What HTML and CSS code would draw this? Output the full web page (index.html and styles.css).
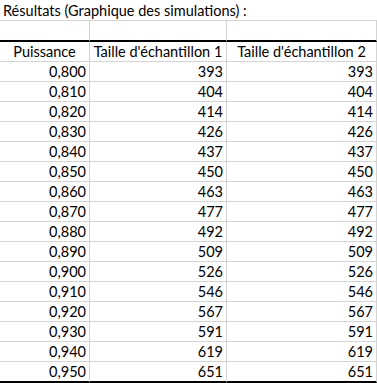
FILE: index.html
```html
<!DOCTYPE html>
<html lang="fr">
<head>
<meta charset="utf-8">
<title>Résultats</title>
<link rel="stylesheet" href="styles.css">
</head>
<body>
<div class="sheet">
  <div class="cell title">Résultats (Graphique des simulations) :</div>
  <div class="cell blank"></div><div class="cell blank"></div><div class="cell blank"></div>
  <div class="cell head">Puissance</div><div class="cell head">Taille d'échantillon 1</div><div class="cell head">Taille d'échantillon 2</div>
  <div class="cell num">0,800</div><div class="cell num">393</div><div class="cell num">393</div>
  <div class="cell num">0,810</div><div class="cell num">404</div><div class="cell num">404</div>
  <div class="cell num">0,820</div><div class="cell num">414</div><div class="cell num">414</div>
  <div class="cell num">0,830</div><div class="cell num">426</div><div class="cell num">426</div>
  <div class="cell num">0,840</div><div class="cell num">437</div><div class="cell num">437</div>
  <div class="cell num">0,850</div><div class="cell num">450</div><div class="cell num">450</div>
  <div class="cell num">0,860</div><div class="cell num">463</div><div class="cell num">463</div>
  <div class="cell num">0,870</div><div class="cell num">477</div><div class="cell num">477</div>
  <div class="cell num">0,880</div><div class="cell num">492</div><div class="cell num">492</div>
  <div class="cell num">0,890</div><div class="cell num">509</div><div class="cell num">509</div>
  <div class="cell num">0,900</div><div class="cell num">526</div><div class="cell num">526</div>
  <div class="cell num">0,910</div><div class="cell num">546</div><div class="cell num">546</div>
  <div class="cell num">0,920</div><div class="cell num">567</div><div class="cell num">567</div>
  <div class="cell num">0,930</div><div class="cell num">591</div><div class="cell num">591</div>
  <div class="cell num">0,940</div><div class="cell num">619</div><div class="cell num">619</div>
  <div class="cell num last">0,950</div><div class="cell num last">651</div><div class="cell num last">651</div>
</div>
</body>
</html>
```
FILE: styles.css
```css
html, body {
  margin: 0;
  padding: 0;
  background: #ffffff;
}
.sheet {
  display: grid;
  grid-template-columns: 90px 137px 150px;
  width: 377px;
  font-family: Lato, "Liberation Sans", sans-serif;
  font-size: 14.5px;
  color: #000000;
}
.cell {
  box-sizing: border-box;
  height: 20px;
  line-height: 18px;
  border-right: 1px solid #d4d4d4;
  border-bottom: 1px solid #d4d4d4;
  display: flex;
  align-items: flex-end;
  white-space: nowrap;
  overflow: visible;
}
.title {
  grid-column: 1 / 4;
  height: 21px;
  padding-left: 3px;
  border-right: none;
}
.blank {
  height: 21px;
  border-bottom: 2px solid #000000;
}
.head {
  justify-content: center;
}
.num {
  justify-content: flex-end;
  padding-right: 3px;
}
.last {
  height: 21px;
  border-bottom: 2px solid #000000;
}
```
